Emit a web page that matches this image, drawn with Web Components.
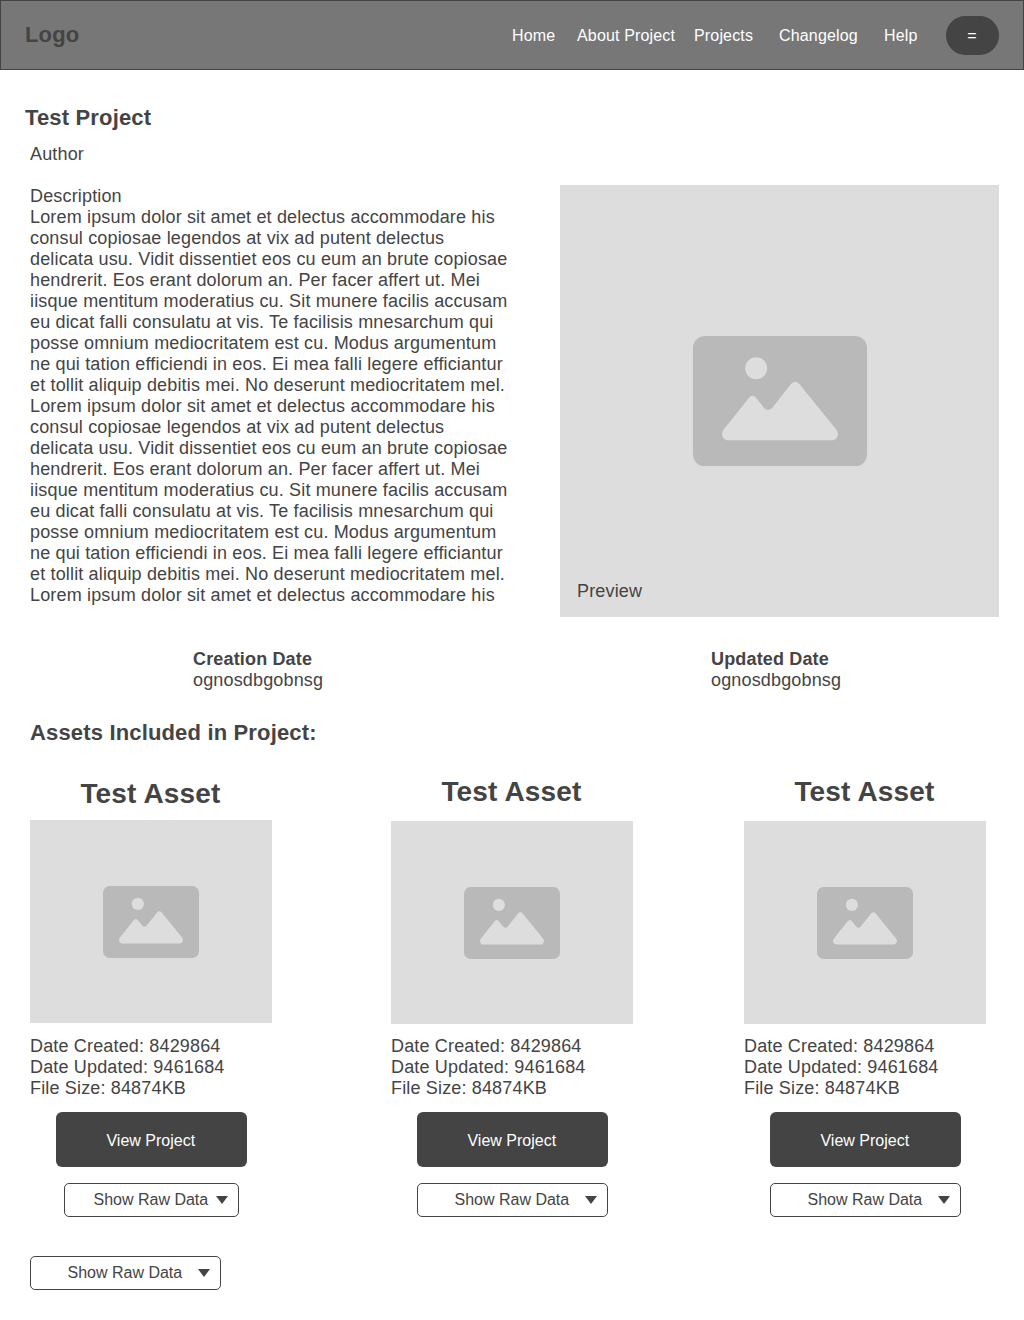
<!DOCTYPE html>
<html lang="en">
<head>
<meta charset="utf-8">
<title>Test Project</title>
<style>
  body { margin: 0; background: #fff; color: #444; font: 18px/21px "Liberation Sans", Arial, sans-serif; letter-spacing: 0.16px; }
</style>
</head>
<body>
<project-page></project-page>
<script>
const define = (name, html, setup) => {
  const template = document.createElement('template');
  template.innerHTML = html;
  customElements.define(name, class extends HTMLElement {
    constructor() {
      super();
      this.attachShadow({ mode: 'open' }).append(template.content.cloneNode(true));
    }
    connectedCallback() { if (setup) setup(this, this.shadowRoot); }
  });
};

define('image-placeholder', `
  <style>
    :host { display: flex; align-items: center; justify-content: center; background: #ddd; position: relative; }
    svg { display: block; width: var(--icon-width, 96px); aspect-ratio: 4 / 3; }
    .caption { position: absolute; left: 17px; bottom: 15px; }
  </style>
  <svg viewBox="0 0 522 391.5" aria-hidden="true">
    <rect width="522" height="391.5" rx="36" fill="#b9b9b9"/>
    <circle cx="189.5" cy="97" r="33" fill="#ddd"/>
    <path fill="#ddd" d="M91 282L168 185Q178 173 189 185L213 215Q225 228 238 215L294 144Q307 130 319 144L431 282C440 295 432 313 417 313H105C90 313 82 295 91 282Z"/>
  </svg>
  <div class="caption"><slot></slot></div>
`);

define('view-button', `
  <style>
    :host { display: block; }
    button { display: block; width: 191px; height: 55px; padding: 2px 1.4px 0 0; border: 0; border-radius: 6px; background: #444; color: #fff; font: 16px/18px "Liberation Sans", Arial, sans-serif; letter-spacing: 0; }
  </style>
  <button><slot></slot></button>
`);

define('raw-data-select', `
  <style>
    :host { display: block; width: 191px; }
    button { box-sizing: border-box; display: grid; grid-template-columns: 1fr auto 1fr; align-items: center; width: 100%; height: 34px; padding: 0 10px 0 9px; border: 1px solid #444; border-radius: 5px; background: #fff; color: #444; font: 16px/18px "Liberation Sans", Arial, sans-serif; letter-spacing: 0; }
    .label { grid-column: 2; margin: 0 0.2px 0 -0.2px; }
    svg { display: block; justify-self: end; }
  </style>
  <button>
    <span class="label"><slot></slot></span>
    <svg width="12" height="8" viewBox="0 0 12 8" aria-hidden="true"><path d="M0 0H12L6 8Z" fill="#444"/></svg>
  </button>
`);

define('site-header', `
  <style>
    :host { box-sizing: border-box; display: flex; align-items: center; justify-content: space-between; height: 70px; padding: 0 24px; border: 1px solid #444; background: #777; }
    .logo { font-size: 22px; line-height: 25px; font-weight: bold; padding-bottom: 1px; }
    nav { display: grid; grid-template-columns: 66px 116px 85px 105px 62px 53px; align-items: center; font-size: 16px; line-height: 18px; }
    a { color: #fff; text-decoration: none; white-space: nowrap; padding-top: 1px; }
    a:nth-child(2) { margin-left: -1px; }
    button { height: 39px; padding: 1px 1px 0 0; border: 0; border-radius: 20px; background: #444; color: #fff; font: 16px/18px "Liberation Sans", Arial, sans-serif; }
  </style>
  <div class="logo">Logo</div>
  <nav><a>Home</a><a>About Project</a><a>Projects</a><a>Changelog</a><a>Help</a><button>=</button></nav>
`);

define('date-field', `
  <style>
    :host { display: block; }
    b { display: block; }
  </style>
  <b></b><slot></slot>
`, (el, root) => { root.querySelector('b').textContent = el.getAttribute('label'); });

define('asset-card', `
  <style>
    :host { display: flex; flex-direction: column; align-items: center; width: 242px; }
    h3 { margin: 0; padding-right: 1px; font-size: 28px; line-height: 32px; }
    image-placeholder { width: 242px; height: 203px; margin-top: var(--image-gap, 13px); }
    .facts { align-self: stretch; margin-top: var(--facts-gap, 12px); }
    .actions { display: flex; flex-direction: column; align-items: center; gap: 16px; margin: 13px 0 0 1px; }
    raw-data-select { width: var(--select-width, 191px); }
  </style>
  <h3>Test Asset</h3>
  <image-placeholder></image-placeholder>
  <div class="facts">
    <div>Date Created: 8429864</div>
    <div>Date Updated: 9461684</div>
    <div>File Size: 84874KB</div>
  </div>
  <div class="actions">
    <view-button>View Project</view-button>
    <raw-data-select>Show Raw Data</raw-data-select>
  </div>
`);

define('project-page', `
  <style>
    :host { display: block; }
    main { padding: 35px 25px 30px 30px; }
    h1, h2 { margin: 0; font-size: 22px; line-height: 25px; }
    h1 { margin-left: -5px; }
    .author { margin-top: 14px; }
    .overview { display: flex; justify-content: space-between; align-items: flex-start; margin-top: 20px; }
    .description { white-space: pre; padding-top: 1px; }
    .preview { width: 439px; height: 432px; --icon-width: 174px; }
    .dates { display: grid; grid-template-columns: 518px auto; margin: 32px 0 0 163px; }
    h2 { margin-top: 29px; }
    .assets { display: flex; align-items: flex-start; margin-top: 31px; }
    .first { margin-top: 2px; margin-right: 119px; --image-gap: 10px; --facts-gap: 13px; --select-width: 175px; }
    .second { margin-right: 111px; }
    .all { margin-top: 39px; }
  </style>
  <site-header></site-header>
  <main>
    <h1>Test Project</h1>
    <div class="author">Author</div>
    <section class="overview">
      <div class="description">Description
Lorem ipsum dolor sit amet et delectus accommodare his
consul copiosae legendos at vix ad putent delectus
delicata usu. Vidit dissentiet eos cu eum an brute copiosae
hendrerit. Eos erant dolorum an. Per facer affert ut. Mei
iisque mentitum moderatius cu. Sit munere facilis accusam
eu dicat falli consulatu at vis. Te facilisis mnesarchum qui
posse omnium mediocritatem est cu. Modus argumentum
ne qui tation efficiendi in eos. Ei mea falli legere efficiantur
et tollit aliquip debitis mei. No deserunt mediocritatem mel.
Lorem ipsum dolor sit amet et delectus accommodare his
consul copiosae legendos at vix ad putent delectus
delicata usu. Vidit dissentiet eos cu eum an brute copiosae
hendrerit. Eos erant dolorum an. Per facer affert ut. Mei
iisque mentitum moderatius cu. Sit munere facilis accusam
eu dicat falli consulatu at vis. Te facilisis mnesarchum qui
posse omnium mediocritatem est cu. Modus argumentum
ne qui tation efficiendi in eos. Ei mea falli legere efficiantur
et tollit aliquip debitis mei. No deserunt mediocritatem mel.
Lorem ipsum dolor sit amet et delectus accommodare his</div>
      <image-placeholder class="preview">Preview</image-placeholder>
    </section>
    <section class="dates">
      <date-field label="Creation Date">ognosdbgobnsg</date-field>
      <date-field label="Updated Date">ognosdbgobnsg</date-field>
    </section>
    <h2>Assets Included in Project:</h2>
    <section class="assets">
      <asset-card class="first"></asset-card>
      <asset-card class="second"></asset-card>
      <asset-card></asset-card>
    </section>
    <raw-data-select class="all">Show Raw Data</raw-data-select>
  </main>
`);
</script>
</body>
</html>
